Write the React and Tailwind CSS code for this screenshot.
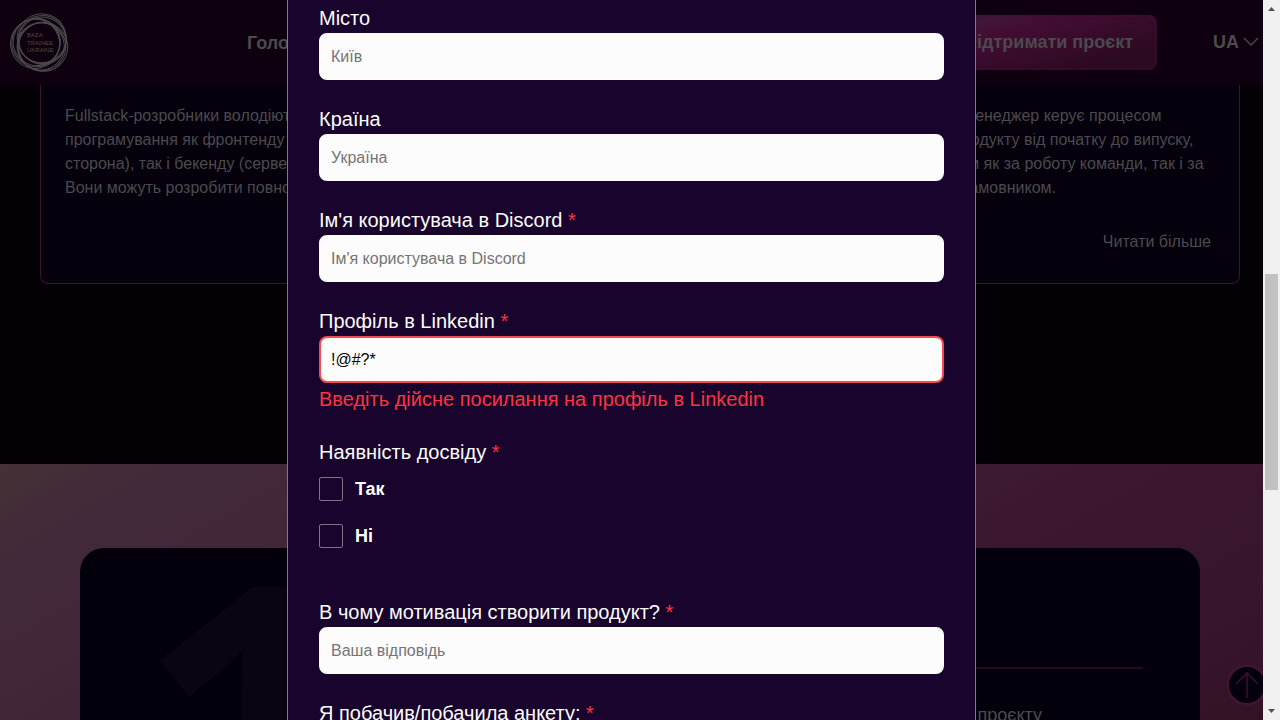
import React from "react";

const ringGroups = [20, 140, 260];
const ringShapes = [
  { offset: 5, r: 24.5, turn: 0 },
  { offset: 4.2, r: 24, turn: 14 },
  { offset: 3.4, r: 23.6, turn: 28 },
];

function Logo() {
  return (
    <svg width="60" height="60" viewBox="0 0 60 60" fill="none" role="img" aria-label="Baza Trainee Ukraine">
      <g stroke="#4b4a4c" strokeWidth="1">
        {ringGroups.map((a) =>
          ringShapes.map((s) => (
            <circle
              key={a + s.turn}
              cx="30"
              cy={30 - s.offset}
              r={s.r}
              transform={`rotate(${a + s.turn} 30 30)`}
            />
          ))
        )}
      </g>
      <g fill="#4b4a4c" fontFamily="Liberation Sans, Arial, sans-serif" fontSize="6">
        <text x="17" y="24">BAZA</text>
        <text x="17" y="31.500">TRAINEE</text>
        <text x="17" y="39">UKRAINE</text>
      </g>
    </svg>
  );
}

function Header() {
  return (
    <header className="flex h-[85px] shrink-0 items-center bg-[#0f000f] pr-1 pl-[10px] text-[18px] leading-6 font-bold text-[#4b4a4c]">
      <a href="#home" className="font-normal"><Logo /></a>
      <nav className="ml-[177px] flex-1">
        <a href="#main">Головна</a>
      </nav>
      <button
        type="button"
        className="h-[55px] rounded-lg bg-[linear-gradient(165deg,#41213a_0%,#430d33_30%,#2c0a22_80%,#2c0a22_100%)] px-6 pb-0.5 shadow-[inset_0_0_4px_#3d0f2f]"
      >
        Підтримати проєкт
      </button>
      <button type="button" className="ml-14 flex items-center gap-1 pb-0.5">
        UA
        <svg width="16" height="9" viewBox="0 0 16 9" fill="none" stroke="#4b4a4c" strokeWidth="1.3">
          <path d="M1 1l7 7 7-7" />
        </svg>
      </button>
    </header>
  );
}

function RoleCard({ lines, more }) {
  return (
    <article className="flex flex-1 flex-col justify-between rounded-b-lg border border-t-0 border-[#3a1631] bg-[#05000c] px-6 pt-[19px] pb-[29px]">
      <p className="whitespace-nowrap">
        {lines.map((l) => (
          <span key={l} className="block">{l}</span>
        ))}
      </p>
      <a href="#more" className="self-end pr-1">{more}</a>
    </article>
  );
}

function Roles() {
  return (
    <section className="flex h-[379px] shrink-0 items-start justify-center bg-[#030006] pr-[23px] pl-10">
      <div className="flex h-[199px] flex-1 gap-6 text-[16px] leading-6 text-[#4b4a4c]">
        <RoleCard
          lines={[
            "Fullstack-розробники володіють",
            "програмування як фронтенду (клієнтська",
            "сторона), так і бекенду (серверна сторона).",
            "Вони можуть розробити повноцінний",
          ]}
          more="Читати більше"
        />
        <RoleCard lines={["Дизайнер"]} more="Читати більше" />
        <RoleCard
          lines={[
            "Проєктний менеджер керує процесом",
            "розробки продукту від початку до випуску,",
            "відповідаючи як за роботу команди, так і за",
            "стосунки з замовником.",
          ]}
          more="Читати більше"
        />
      </div>
    </section>
  );
}

function Stats() {
  return (
    <section className="flex-1 overflow-hidden bg-[linear-gradient(150deg,#443036_0%,#42293a_12%,#412537_30%,#3b182e_65%,#37152b_85%,#341226_100%)] pt-[84px] pr-[63px] pl-20">
      <div className="flex h-[400px] justify-between rounded-t-3xl bg-[#04000b] pr-[57px] pl-[56px]">
        <div className="h-[300px] font-['Open_Sans',sans-serif] text-[400px] leading-[340px] font-bold text-[#0a0511]">1</div>
        <div className="mt-[119px] flex-1 border-t-2 border-[#250a20] pt-[34px] text-right text-[18px] leading-6 text-[#4b4a4c]">
          <p className="pr-[101px]">завершених проєкту</p>
        </div>
      </div>
    </section>
  );
}

function Required() {
  return <span className="text-[#fc3441]">*</span>;
}

function Label({ id, required, children }) {
  return (
    <label htmlFor={id} className="block text-[20px] leading-[23px] text-[#fcfcfc]">
      {children} {required && <Required />}
    </label>
  );
}

function Field({ id, label, placeholder, value, required, error }) {
  return (
    <div>
      <Label id={id} required={required}>{label}</Label>
      <input
        id={id}
        type="text"
        placeholder={placeholder}
        defaultValue={value}
        aria-invalid={Boolean(error)}
        className={
          "mt-[3px] block h-[47px] w-full rounded-lg border-2 bg-[#fcfcfc] px-[10px] text-[16px] text-black outline-none placeholder:text-[#757575] " +
          (error ? "border-[#f14a55]" : "border-[#fcfcfc]")
        }
      />
      {error && <p className="mt-[5px] text-[20px] leading-[23px] text-[#fc3441]">{error}</p>}
    </div>
  );
}

function Check({ id, label }) {
  return (
    <div className="flex items-center gap-3">
      <input id={id} type="checkbox" className="size-6 appearance-none rounded-xs border border-[#7c7484] checked:bg-[#c84bae]" />
      <label htmlFor={id} className="text-[18px] leading-6 font-bold text-white">{label}</label>
    </div>
  );
}

function ApplicationForm() {
  return (
    <form className="flex w-full max-w-[689px] flex-col gap-7 overflow-hidden border-x border-[#c84bae] bg-[#18042c] px-[31px] pt-[7px]">
      <Field id="city" label="Місто" placeholder="Київ" />
      <Field id="country" label="Країна" placeholder="Україна" />
      <Field id="discord" label="Ім'я користувача в Discord" placeholder="Ім'я користувача в Discord" required />
      <Field
        id="linkedin"
        label="Профіль в Linkedin"
        value="!@#?*"
        required
        error="Введіть дійсне посилання на профіль в Linkedin"
      />
      <fieldset className="pt-0.5 pb-[25px]">
        <legend className="contents">
          <span className="block text-[20px] leading-[23px] text-[#fcfcfc]">
            Наявність досвіду <Required />
          </span>
        </legend>
        <div className="mt-[13px] flex flex-col gap-[23px]">
          <Check id="yes" label="Так" />
          <Check id="no" label="Ні" />
        </div>
      </fieldset>
      <Field id="motivation" label="В чому мотивація створити продукт?" placeholder="Ваша відповідь" required />
      <Field id="source" label="Я побачив/побачила анкету:" required />
    </form>
  );
}

function Scrollbar() {
  return (
    <div aria-hidden="true" className="flex w-[17px] shrink-0 flex-col items-center bg-[#f0f0f0]">
      <svg width="17" height="17" viewBox="0 0 17 17" fill="#505050"><path d="M5 11h7L8.500 7z" /></svg>
      <div className="flex w-[13px] flex-1 flex-col">
        <div className="flex-[257]" />
        <div className="flex-[216] bg-[#c1c1c1]" />
        <div className="flex-[213]" />
      </div>
      <svg width="17" height="17" viewBox="0 0 17 17" fill="#505050"><path d="M5 6h7l-3.500 4z" /></svg>
    </div>
  );
}

export default function App() {
  return (
    <div className="flex h-screen overflow-hidden bg-[#030006] font-['Liberation_Sans',Arial,sans-serif]">
      <main className="relative flex flex-1 flex-col overflow-hidden">
        <Header />
        <Roles />
        <Stats />
        <button
          type="button"
          aria-label="Вгору"
          className="absolute -right-1 bottom-[15px] flex size-10 items-center justify-center rounded-full border-2 border-[#431634] bg-[#04000b]"
        >
          <svg width="24" height="28" viewBox="0 0 24 28" fill="none" stroke="#36112e" strokeWidth="1.6">
            <path d="M12 27V2M1 13L12 2l11 11" />
          </svg>
        </button>
        <div className="absolute inset-0 flex justify-center">
          <ApplicationForm />
        </div>
      </main>
      <Scrollbar />
    </div>
  );
}
